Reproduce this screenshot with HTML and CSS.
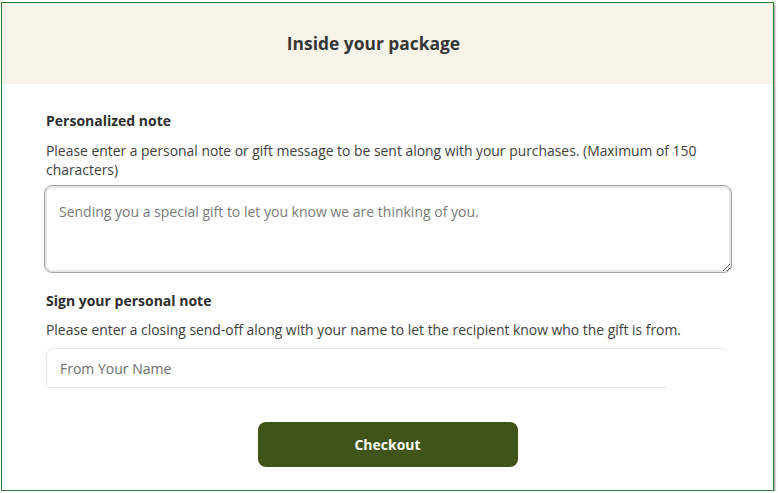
FILE: index.html
```html
<!DOCTYPE html>
<html lang="en">
<head>
<meta charset="utf-8">
<title>Inside your package</title>
<link rel="stylesheet" href="styles.css">
</head>
<body>
<div class="window">
  <header class="head">
    <h1 class="title">Inside your package</h1>
  </header>
  <main class="content">
    <section class="field field-note">
      <h2 class="label">Personalized note</h2>
      <p class="help help-note">Please enter a personal note or gift message to be sent along with your purchases. (Maximum of 150 characters)</p>
      <textarea class="note" placeholder="Sending you a special gift to let you know we are thinking of you."></textarea>
    </section>
    <section class="field field-sign">
      <h2 class="label">Sign your personal note</h2>
      <p class="help help-sign">Please enter a closing send-off along with your name to let the recipient know who the gift is from.</p>
      <input class="name" type="text" placeholder="From Your Name">
    </section>
    <div class="actions">
      <button class="checkout" type="button">Checkout</button>
    </div>
  </main>
</div>
</body>
</html>
```

FILE: styles.css
```css
* { box-sizing: border-box; }
html, body { margin: 0; padding: 0; background: #ffffff; }
body {
  font-family: "Open Sans", "Liberation Sans", sans-serif;
  color: #333333;
  padding: 2px 0 0 1px;
}
.window {
  width: 773px;
  height: 489px;
  border: 1px solid #2f7d36;
  background: #ffffff;
  box-shadow: 1px 2px 2px rgba(0,0,0,0.45);
  display: flex;
  flex-direction: column;
}
.head {
  height: 81px;
  background: #f8f4ea;
  display: flex;
  align-items: center;
  justify-content: center;
  padding: 0 28px 2px 0;
}
.title {
  margin: 0;
  font-size: 17.4px;
  font-weight: 700;
  color: #363636;
}
.content {
  padding: 27px 42px 0 44px;
  display: flex;
  flex-direction: column;
}
.label {
  margin: 0;
  font-size: 14px;
  line-height: 19px;
  font-weight: 700;
  color: #2e2e2e;
}
.help {
  margin: 11px 0 0;
  font-size: 13.9px;
  line-height: 19px;
  color: #404040;
}
.help-note { max-width: 680px; }
.help-sign { margin-top: 10px; }
.note {
  display: block;
  width: 688px;
  height: 88px;
  margin: 6px 0 0 -2px;
  padding: 16px 14px 14px;
  border: 1px solid #a4a4a4;
  border-radius: 8px;
  box-shadow: inset 0 0 0 2px #e6e6e6;
  font-family: inherit;
  font-size: 14px;
  line-height: 19px;
  color: #333;
  resize: vertical;
  background: #fff;
  outline: none;
}
.note::placeholder { color: #7a7a7a; }
.field-sign { margin-top: 18px; }
.name {
  display: block;
  width: 684px;
  height: 41px;
  margin-top: 9px;
  padding: 0 13px;
  border: 1px solid #e8e8e8;
  border-right-color: transparent;
  border-bottom-color: transparent;
  border-radius: 8px;
  background: #fff linear-gradient(#e6e6e6, #e6e6e6) left bottom / 620px 1px no-repeat;
  font-family: inherit;
  font-size: 14px;
  color: #333;
  outline: none;
}
.name::placeholder { color: #6e6e6e; }
.actions {
  display: flex;
  justify-content: center;
  margin-top: 33px;
  padding-right: 2px;
}
.checkout {
  width: 260px;
  height: 45px;
  border: none;
  border-radius: 8px;
  background: #3f5416;
  color: #ffffff;
  font-family: inherit;
  font-size: 14px;
  font-weight: 700;
  cursor: pointer;
}
```
